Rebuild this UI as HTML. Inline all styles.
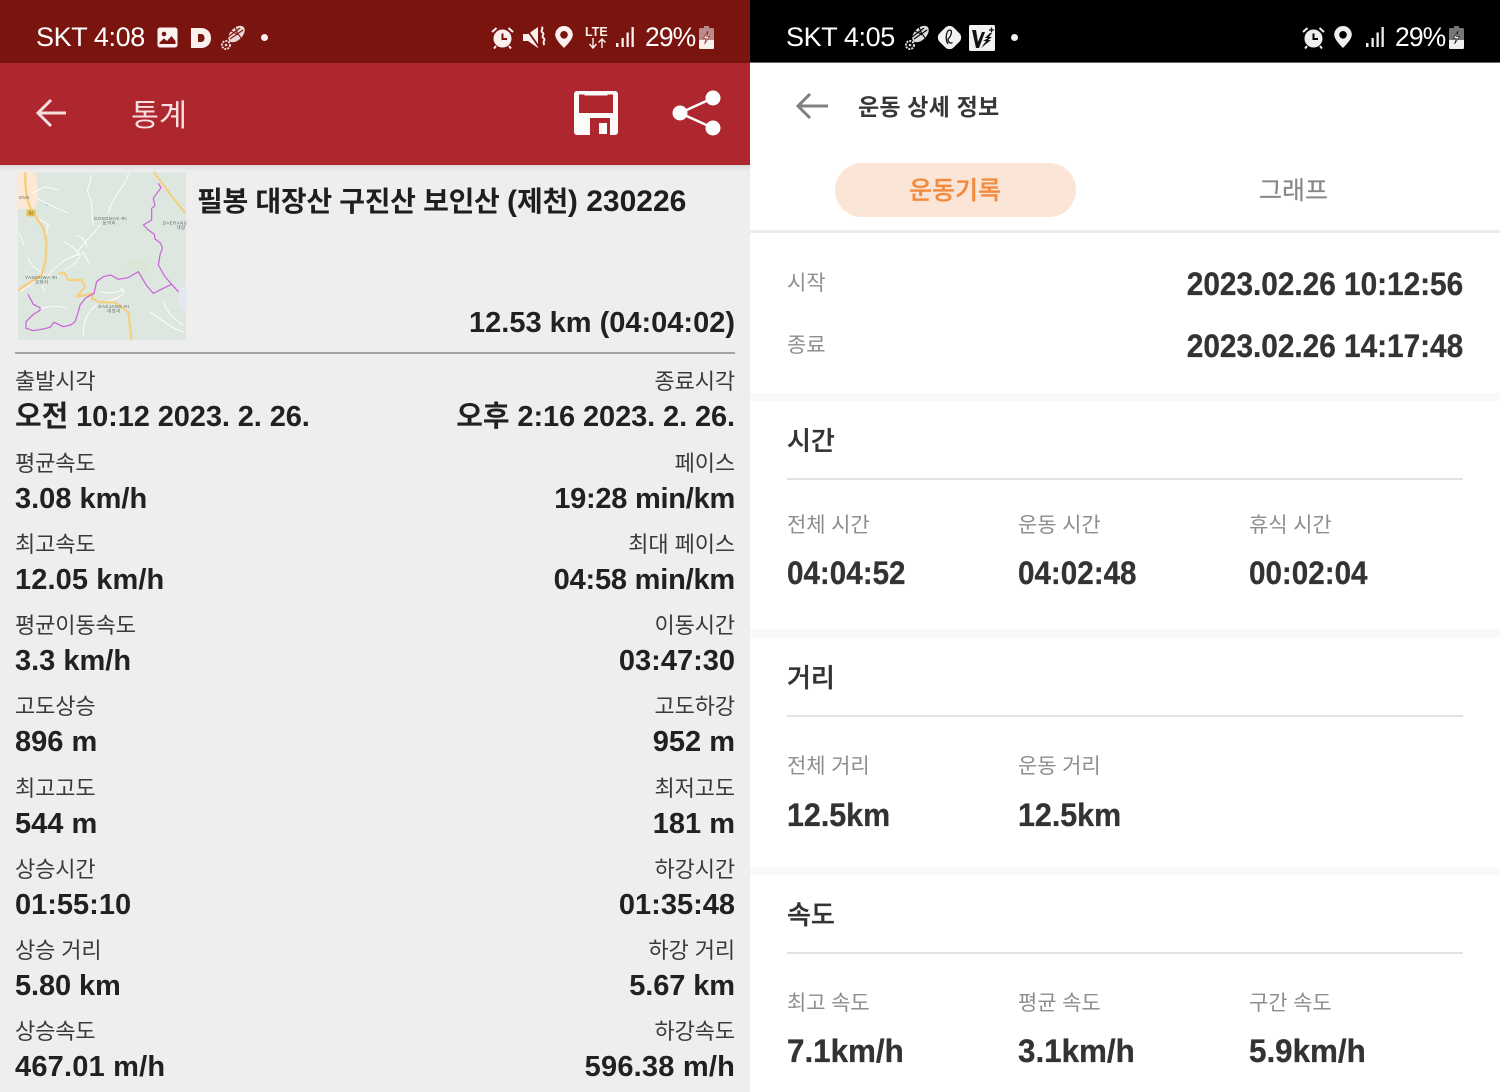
<!DOCTYPE html>
<html lang="ko"><head><meta charset="utf-8"><title>통계</title>
<style>
*{margin:0;padding:0;box-sizing:border-box}
html,body{width:1500px;height:1092px;overflow:hidden;background:#fff}
body{position:relative;font-family:"Liberation Sans","Noto Sans CJK KR",sans-serif}
.a{position:absolute;white-space:nowrap;line-height:1}
.bar{position:absolute}
.lab{font-size:22px;color:#3a3a3a;font-weight:400;letter-spacing:-.1px;margin-top:1px}
.val{font-size:29px;color:#212121;font-weight:700;letter-spacing:0}
.r{right:765px}
.l{left:15px}
.st{font-size:27px;color:#fff;letter-spacing:-.4px}
.pc{font-size:26.500px;letter-spacing:-.9px;top:24px}
.rl{font-size:21px;color:#8e8e8e;letter-spacing:-.1px}
.rh{font-size:26px;color:#333;font-weight:500;-webkit-text-stroke:.35px #333}
.d{font-size:32px;font-weight:700;color:#333;transform-origin:0 50%;transform:scaleX(.925);-webkit-text-stroke:.3px #333}
.k{transform:scaleX(.95)}
.h{transform:scaleX(.98)}
.dr{font-size:32px;font-weight:700;color:#333;transform-origin:100% 50%;transform:scaleX(.93);right:37px;-webkit-text-stroke:.3px #333}
svg{position:absolute;overflow:visible}
</style></head><body>

<!-- LEFT PANEL -->
<div class="bar" style="left:0;top:0;width:750px;height:1092px;background:#eeeeee"></div>
<div class="bar" style="left:0;top:0;width:750px;height:63px;background:#7a140e"></div>
<div class="bar" style="left:0;top:63px;width:750px;height:102px;background:#ae262e"></div>
<div class="bar" style="left:0;top:165px;width:750px;height:6px;background:linear-gradient(#dcdcdc,#eeeeee)"></div>

<div class="a st" style="left:36px;top:24px">SKT 4:08</div>
<!-- image icon -->
<svg style="left:157px;top:27px" width="21" height="21" viewBox="0 0 21 21"><rect width="20" height="20" x=".5" y=".5" rx="2.5" fill="#fbf3f2"/><circle cx="7" cy="7" r="2.3" fill="#7a140e"/><path d="M2.500 15.500l4.500-4 3 2.500 4.500-5 4 5v3h-16z" fill="#7a140e"/></svg>
<!-- D -->
<svg style="left:191px;top:28px" width="21" height="20" viewBox="0 0 21 20"><path fill-rule="evenodd" d="M0 0h10c6 0 10 4 10 10s-4 10-10 10H0zM7 6v8h3c2.200 0 3.500-1.700 3.500-4S12.200 6 10 6z" fill="#fbf0ee"/></svg>
<!-- shoe -->
<svg style="left:220px;top:25px" width="26" height="26" viewBox="0 0 26 26"><ellipse cx="16.500" cy="9" rx="6" ry="10" transform="rotate(45 16.500 9)" fill="#ecd6d3"/><path d="M8 12L20 3M10 14L23 5M11 6l4 2 4 2 2 3M15 2l2 5 1 3" stroke="#7a140e" stroke-width="1.100" fill="none"/><circle cx="6" cy="20" r="4" fill="none" stroke="#eed9d6" stroke-width="2" stroke-dasharray="2 1"/><circle cx="6" cy="20" r="1.300" fill="#eed9d6"/></svg>
<div class="bar" style="left:261px;top:34px;width:7px;height:7px;border-radius:50%;background:#fbf0ee"></div>
<!-- alarm -->
<svg style="left:491px;top:26px" width="23" height="23" viewBox="0 0 23 23"><circle cx="11.500" cy="12.500" r="9" fill="#fbf0ee"/><path d="M11.500 7.500v5.500h4.500" fill="none" stroke="#7a140e" stroke-width="2"/><path d="M1 6l4.500-4M17.500 2L22 6M5 20l-2 2.500M18 20l2 2.500" stroke="#fbf0ee" stroke-width="2"/></svg>
<!-- mute vibrate -->
<svg style="left:523px;top:26px" width="23" height="23" viewBox="0 0 23 23"><path d="M0 8h5l10-7v21L5 15H0z" fill="#fbf0ee"/><path d="M2 1l14 20" stroke="#7a140e" stroke-width="1.800"/><path d="M18.500 1c3 2-2 3 1 5.500s-2 3 1 5.500-2 3 1 7" fill="none" stroke="#fbf0ee" stroke-width="2"/></svg>
<!-- pin -->
<svg style="left:555px;top:26px" width="18" height="22" viewBox="0 0 18 22"><path fill-rule="evenodd" d="M9 0a8.800 8.800 0 0 1 8.800 8.800C17.800 14 9 22 9 22S.2 14 .2 8.800A8.800 8.800 0 0 1 9 0zm0 5a3.800 3.800 0 1 0 0 7.600A3.800 3.800 0 0 0 9 5z" fill="#fbf0ee"/></svg>
<!-- LTE -->
<div class="a" style="left:585px;top:26px;font-size:12.500px;font-weight:700;color:#fbf0ee">LTE</div>
<svg style="left:588px;top:38px" width="20" height="11" viewBox="0 0 20 11"><path d="M5 0v9M1.500 6L5 10l3.500-4M14 10V1M10.500 4.500L14 1l3.500 3.500" fill="none" stroke="#fbf0ee" stroke-width="1.400"/></svg>
<!-- signal -->
<svg style="left:615px;top:27px" width="20" height="20" viewBox="0 0 20 20" fill="#fbf0ee"><rect x="1" y="16" width="2.500" height="4"/><rect x="6.500" y="11" width="2.300" height="9"/><rect x="11.500" y="5.500" width="2.300" height="14.500"/><rect x="16.500" y="0" width="2.300" height="20"/></svg>
<div class="a st pc" style="left:645px">29%</div>
<!-- battery -->
<svg style="left:699px;top:26px" width="16" height="23" viewBox="0 0 16 23"><path d="M5 0h5v2h4a1.500 1.500 0 0 1 1 1.500v18a1.500 1.500 0 0 1-1.500 1.500h-12A1.500 1.500 0 0 1 0 21.500v-18A1.500 1.500 0 0 1 1.500 2H5z" fill="#b98a87"/><path d="M0 14h15v7.500a1.500 1.500 0 0 1-1.500 1.500h-12A1.500 1.500 0 0 1 0 21.500z" fill="#fbf0ee"/><path d="M9 5l-4.500 7.500h3L5.500 18l5-7.500h-3z" fill="#fbf0ee" stroke="#7a140e" stroke-width=".6"/></svg>

<!-- toolbar -->
<svg style="left:36px;top:98px" width="31" height="31" viewBox="0 0 31 31"><path d="M30 15H3M15 2L2 15l13 13" fill="none" stroke="#f7dfe0" stroke-width="3"/></svg>
<div class="a" style="left:131px;top:101px;font-size:30.500px;color:#f6dfe0">통계</div>
<svg style="left:574px;top:91px" width="44" height="44" viewBox="0 0 44 44"><rect width="44" height="44" rx="3" fill="#fdfafa"/><path d="M5 3.500h5.500v1h23v-1H39V22H5z" fill="#ae262e"/><rect x="10.500" y="0" width="23" height="3.500" fill="#fdfafa"/><path d="M16 27h20v17H16z" fill="#ae262e"/><rect x="25" y="32" width="8" height="11" fill="#fdfafa"/></svg>
<svg style="left:672px;top:90px" width="50" height="46" viewBox="0 0 50 46" fill="#fff"><circle cx="8" cy="23" r="7.500"/><circle cx="41" cy="8" r="7.500"/><circle cx="41" cy="38" r="7.500"/><path d="M8 23L41 8M8 23l33 15" stroke="#fff" stroke-width="2.500"/></svg>

<!-- map -->
<svg style="left:0;top:165px" width="200" height="190" viewBox="0 0 600 570">
<rect x="54" y="22" width="504" height="504" fill="#dde7e0"/>
<path d="M54 22h40c20 0 18 30 18 55s2 55-18 55H54z" fill="#fbe9d5"/>
<path d="M380 300c30-30 60-20 70 20s-40 20-70-20z" fill="#d8e5d4" opacity=".7"/>
<path d="M535 380l23-30v95l-23-20z" fill="#e6e6ef"/>
<circle cx="139" cy="119" r="3" fill="#a8c4ea"/>
<g fill="none" stroke="#fff" stroke-width="2.700" stroke-linejoin="round">
<path d="M270 30c10 30-20 30 0 70 12 30 2 60 10 80M385 25c-5 40-45 60-60 120M110 100l40 20 55 25M95 85l40-20 40 10M230 210c20 10 30 20 30 35M190 230c20 10 35 20 50 40-40 0-90 50-100 70M85 280c10 30 40 40 50 50M250 260l20 40M300 180c-20 30-60 60-70 90M450 440c30 20 60 50 100 60M290 420c-30 20-40 50-40 90M120 430c30-5 60-10 80 0M360 370c30 10 0 30-40 40M490 410c10 30 30 50 60 70M56 205c10 10 10 20 15 35M100 150l45 30-10 45M60 380l60-40M300 380c20 5 50 5 70-5M125 360l10 20"/>
<path d="M170 335l60-45 20-30" stroke="#eef1ee" stroke-width="5"/>
</g>
<path d="M75 22c2 40 0 70 17 108l38 60c12 30 10 70 5 105l-10 35-70 45" fill="none" stroke="#f6cf7e" stroke-width="7"/>
<path d="M462 22l48 65 46 58" fill="none" stroke="#f6cf7e" stroke-width="6"/>
<path d="M175 328l17-6 13 23h40l10 20-25 30 50-10-5 15 25 12h45l40 30 10 83" fill="none" stroke="#f6cf7e" stroke-width="6.500" stroke-linejoin="round"/>
<rect x="79" y="134" width="28" height="20" rx="4" fill="#e9c34f"/>
<polyline points="84,388 100,418 120,428 120,436 100,448 78,470 78,490 100,497 130,492 150,487 162,472 190,485 212,480 225,470 235,440 240,420 258,398 282,385 290,350 310,335 332,330 355,343 385,338 415,320 440,362 460,385 490,370 515,358 535,380 515,358 495,335 475,300 480,270 487,250 482,235 465,222 463,208 445,195 430,180 455,165 455,130 465,122 460,100 483,68 475,55" fill="none" stroke="#c962d8" stroke-width="3.600" stroke-linejoin="round"/>
<g font-family="Liberation Sans,Noto Sans CJK KR,sans-serif" font-size="13" fill="#5d6664" letter-spacing="1.500">
<text x="282" y="165">DONGMAK-RI</text><text x="308" y="178">동막리</text>
<text x="75" y="342">YANGHWA-RI</text><text x="105" y="355">양화리</text>
<text x="295" y="429">DAEJANG-RI</text><text x="322" y="442">대장리</text>
<text x="488" y="178">DAERANG</text><text x="530" y="192">대랑</text>
<text x="56" y="102">ONG</text>
</g>
<text x="86" y="149" font-family="Liberation Sans" font-size="13" fill="#555">82</text>
</svg>
<div class="a" style="left:197px;top:187px;font-size:28px;font-weight:700;color:#1e1e1e;letter-spacing:-.3px">필봉 대장산 구진산 보인산 <span style="font-size:30px;letter-spacing:0">(</span>제천<span style="font-size:30px;letter-spacing:0">) 230226</span></div>
<div class="a val r" style="top:309px">12.53 km (04:04:02)</div>
<div class="bar" style="left:15px;top:352px;width:720px;height:2px;background:#a3a3a3"></div>

<div class="a lab l" style="top:370px">출발시각</div><div class="a lab r" style="top:370px">종료시각</div>
<div class="a val l" style="top:403px;letter-spacing:-.1px">오전 10:12 2023. 2. 26.</div><div class="a val r" style="top:403px;letter-spacing:-.1px">오후 2:16 2023. 2. 26.</div>
<div class="a lab l" style="top:452px">평균속도</div><div class="a lab r" style="top:452px">페이스</div>
<div class="a val l" style="top:485px">3.08 km/h</div><div class="a val r" style="top:485px;letter-spacing:-.25px">19:28 min/km</div>
<div class="a lab l" style="top:533px">최고속도</div><div class="a lab r" style="top:533px">최대 페이스</div>
<div class="a val l" style="top:566px;letter-spacing:.1px">12.05 km/h</div><div class="a val r" style="top:566px;letter-spacing:-.2px">04:58 min/km</div>
<div class="a lab l" style="top:614px">평균이동속도</div><div class="a lab r" style="top:614px">이동시간</div>
<div class="a val l" style="top:647px">3.3 km/h</div><div class="a val r" style="top:647px">03:47:30</div>
<div class="a lab l" style="top:695px">고도상승</div><div class="a lab r" style="top:695px">고도하강</div>
<div class="a val l" style="top:728px">896 m</div><div class="a val r" style="top:728px">952 m</div>
<div class="a lab l" style="top:777px">최고고도</div><div class="a lab r" style="top:777px">최저고도</div>
<div class="a val l" style="top:810px">544 m</div><div class="a val r" style="top:810px">181 m</div>
<div class="a lab l" style="top:858px">상승시간</div><div class="a lab r" style="top:858px">하강시간</div>
<div class="a val l" style="top:891px">01:55:10</div><div class="a val r" style="top:891px">01:35:48</div>
<div class="a lab l" style="top:939px">상승 거리</div><div class="a lab r" style="top:939px">하강 거리</div>
<div class="a val l" style="top:972px;letter-spacing:-.1px">5.80 km</div><div class="a val r" style="top:972px;letter-spacing:-.1px">5.67 km</div>
<div class="a lab l" style="top:1020px">상승속도</div><div class="a lab r" style="top:1020px">하강속도</div>
<div class="a val l" style="top:1053px;letter-spacing:.2px">467.01 m/h</div><div class="a val r" style="top:1053px;letter-spacing:.2px">596.38 m/h</div>

<!-- RIGHT PANEL -->
<div class="bar" style="left:750px;top:0;width:750px;height:62px;background:#000"></div>
<div class="bar" style="left:750px;top:62px;width:750px;height:1px;background:#666"></div>
<div class="a st" style="left:786px;top:24px">SKT 4:05</div>
<svg style="left:904px;top:25px" width="26" height="26" viewBox="0 0 26 26"><ellipse cx="16.500" cy="9" rx="6" ry="10" transform="rotate(45 16.500 9)" fill="#dcdcdc"/><path d="M8 12L20 3M10 14L23 5M11 6l4 2 4 2 2 3M15 2l2 5 1 3" stroke="#000" stroke-width="1.100" fill="none"/><circle cx="6" cy="20" r="4" fill="none" stroke="#ddd" stroke-width="2" stroke-dasharray="2 1"/><circle cx="6" cy="20" r="1.300" fill="#ddd"/></svg>
<svg style="left:937px;top:25px" width="25" height="25" viewBox="0 0 25 25"><rect x="2.500" y="2.500" width="20" height="20" rx="6" transform="rotate(45 12.500 12.500)" fill="#f2f2f2"/><path d="M11 19c-3-4-2-14 2-14 2.500 0 1.500 6-2 9 0 3 2 5 4.500 3.500" fill="none" stroke="#111" stroke-width="1.300"/></svg>
<svg style="left:969px;top:25px" width="26" height="26" viewBox="0 0 26 26"><rect width="26" height="26" rx="1.500" fill="#f2f2f2"/><path d="M3 5h4l2 12 4-10h3l-6 16H7z" fill="#111"/><path d="M21 8l-5 5h3l-5 3h3l-5 7 10-8h-3l4-3h-3l3-4z" fill="#111"/><path d="M20 5h5M22.500 2.500v5" stroke="#111" stroke-width="1.300"/></svg>
<div class="bar" style="left:1011px;top:34px;width:7px;height:7px;border-radius:50%;background:#f2f2f2"></div>
<svg style="left:1302px;top:26px" width="23" height="23" viewBox="0 0 23 23"><circle cx="11.500" cy="12.500" r="9" fill="#efefef"/><path d="M11.500 7.500v5.500h4.500" fill="none" stroke="#000" stroke-width="2"/><path d="M1 6l4.500-4M17.500 2L22 6M5 20l-2 2.500M18 20l2 2.500" stroke="#efefef" stroke-width="2"/></svg>
<svg style="left:1334px;top:26px" width="18" height="22" viewBox="0 0 18 22"><path fill-rule="evenodd" d="M9 0a8.800 8.800 0 0 1 8.800 8.800C17.800 14 9 22 9 22S.2 14 .2 8.800A8.800 8.800 0 0 1 9 0zm0 5a3.800 3.800 0 1 0 0 7.600A3.800 3.800 0 0 0 9 5z" fill="#efefef"/></svg>
<svg style="left:1365px;top:27px" width="20" height="20" viewBox="0 0 20 20" fill="#efefef"><rect x="1" y="16" width="2.500" height="4"/><rect x="6.500" y="11" width="2.300" height="9"/><rect x="11.500" y="5.500" width="2.300" height="14.500"/><rect x="16.500" y="0" width="2.300" height="20"/></svg>
<div class="a st pc" style="left:1395px">29%</div>
<svg style="left:1449px;top:26px" width="16" height="23" viewBox="0 0 16 23"><path d="M5 0h5v2h4a1.500 1.500 0 0 1 1 1.500v18a1.500 1.500 0 0 1-1.500 1.500h-12A1.500 1.500 0 0 1 0 21.500v-18A1.500 1.500 0 0 1 1.500 2H5z" fill="#777"/><path d="M0 14h15v7.500a1.500 1.500 0 0 1-1.500 1.500h-12A1.500 1.500 0 0 1 0 21.500z" fill="#eee"/><path d="M9 5l-4.500 7.500h3L5.500 18l5-7.500h-3z" fill="#eee" stroke="#000" stroke-width=".6"/></svg>

<svg style="left:795px;top:92px" width="34" height="28" viewBox="0 0 34 28"><path d="M33 14H3M15 2L3 14l12 12" fill="none" stroke="#808080" stroke-width="3"/></svg>
<div class="a" style="left:858px;top:96px;font-size:23px;font-weight:700;color:#373737;letter-spacing:.2px">운동 상세 정보</div>
<div class="bar" style="left:835px;top:163px;width:241px;height:54px;border-radius:27px;background:#fbe5d6"></div>
<div class="a" style="left:909px;top:179px;font-size:25px;font-weight:500;color:#f28a3f;-webkit-text-stroke:.3px #f28a3f">운동기록</div>
<div class="a" style="left:1259px;top:179px;font-size:25px;color:#888;-webkit-text-stroke:.2px #888">그래프</div>
<div class="bar" style="left:750px;top:230px;width:750px;height:3px;background:#ececec"></div>

<div class="a rl" style="left:787px;top:273px">시작</div>
<div class="a dr" style="top:268px">2023.02.26 10:12:56</div>
<div class="a rl" style="left:787px;top:335px">종료</div>
<div class="a dr" style="top:330px">2023.02.26 14:17:48</div>
<div class="bar" style="left:750px;top:393px;width:750px;height:8px;background:#f9f9f9"></div>

<div class="a rh" style="left:787px;top:428px">시간</div>
<div class="bar" style="left:787px;top:478px;width:676px;height:2px;background:#e3e3e3"></div>
<div class="a rl" style="left:787px;top:515px">전체 시간</div>
<div class="a rl" style="left:1018px;top:515px">운동 시간</div>
<div class="a rl" style="left:1249px;top:515px">휴식 시간</div>
<div class="a d" style="left:787px;top:557px">04:04:52</div>
<div class="a d" style="left:1018px;top:557px">04:02:48</div>
<div class="a d" style="left:1249px;top:557px">00:02:04</div>
<div class="bar" style="left:750px;top:629px;width:750px;height:9px;background:#f9f9f9"></div>

<div class="a rh" style="left:787px;top:665px">거리</div>
<div class="bar" style="left:787px;top:715px;width:676px;height:2px;background:#e3e3e3"></div>
<div class="a rl" style="left:787px;top:756px">전체 거리</div>
<div class="a rl" style="left:1018px;top:756px">운동 거리</div>
<div class="a d k" style="left:787px;top:799px">12.5km</div>
<div class="a d k" style="left:1018px;top:799px">12.5km</div>
<div class="bar" style="left:750px;top:867px;width:750px;height:8px;background:#f9f9f9"></div>

<div class="a rh" style="left:787px;top:902px">속도</div>
<div class="bar" style="left:787px;top:952px;width:676px;height:2px;background:#e3e3e3"></div>
<div class="a rl" style="left:787px;top:993px">최고 속도</div>
<div class="a rl" style="left:1018px;top:993px">평균 속도</div>
<div class="a rl" style="left:1249px;top:993px">구간 속도</div>
<div class="a d h" style="left:787px;top:1035px">7.1km/h</div>
<div class="a d h" style="left:1018px;top:1035px">3.1km/h</div>
<div class="a d h" style="left:1249px;top:1035px">5.9km/h</div>

</body></html>
